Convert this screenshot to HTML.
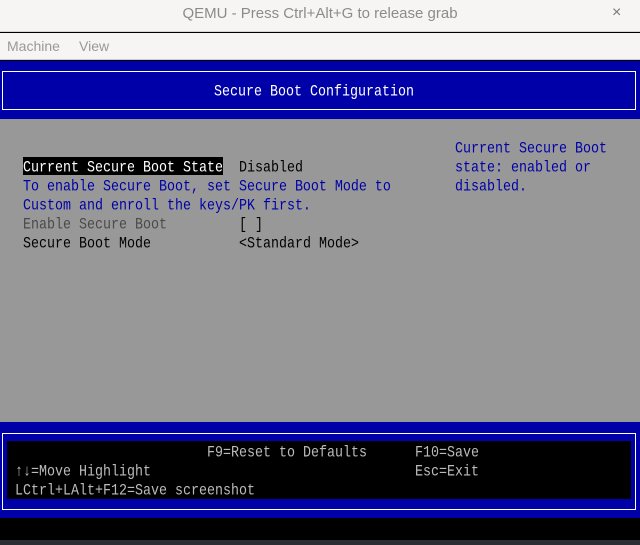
<!DOCTYPE html>
<html><head><style>
*{margin:0;padding:0;box-sizing:border-box}
body{width:640px;height:545px;overflow:hidden;background:#000;position:relative;font-family:"Liberation Sans",sans-serif}
.abs{position:absolute}
.t{position:absolute;font-family:"Liberation Mono",monospace;font-size:13.33px;line-height:19px;height:19px;white-space:pre;transform:translateY(2px) scaleY(1.2);transform-origin:center}
</style></head><body>
<div class="abs" style="left:0;top:0;width:640px;height:32px;background:#f6f5f4;border-bottom:1px solid #d8d4d0"></div>
<div class="abs" style="left:0;top:5px;width:640px;text-align:center;font-size:15px;color:#8b8b8b">QEMU - Press Ctrl+Alt+G to release grab</div>
<div class="abs" style="left:612px;top:4px;font-size:16px;color:#777">×</div>
<div class="abs" style="left:0;top:33px;width:640px;height:27px;background:#f6f5f4;border-bottom:1px solid #ccc"></div>
<div class="abs" style="left:7px;top:38px;font-size:14px;color:#999">Machine</div>
<div class="abs" style="left:79px;top:38px;font-size:14px;color:#999">View</div>
<div class="abs" style="left:0;top:61px;width:640px;height:58px;background:#0000a8"></div>
<div class="abs" style="left:2px;top:71px;width:634px;height:39px;border:1px solid #fff"></div>
<div class="t" style="left:214px;top:81px;color:#fff">Secure Boot Configuration</div>
<div class="abs" style="left:0;top:119px;width:640px;height:303px;background:#989898"></div>
<div class="abs" style="left:23px;top:157px;width:200px;height:18px;background:#000"></div>
<div class="t" style="left:23px;top:157px;color:#fff">Current Secure Boot State</div>
<div class="t" style="left:239px;top:157px;color:#000">Disabled</div>
<div class="t" style="left:23px;top:176px;color:#0000a8">To enable Secure Boot, set Secure Boot Mode to</div>
<div class="t" style="left:23px;top:195px;color:#0000a8">Custom and enroll the keys/PK first.</div>
<div class="t" style="left:23px;top:214px;color:#4a4a4a">Enable Secure Boot</div>
<div class="t" style="left:239px;top:214px;color:#000">[ ]</div>
<div class="t" style="left:23px;top:233px;color:#000">Secure Boot Mode</div>
<div class="t" style="left:239px;top:233px;color:#000">&lt;Standard Mode&gt;</div>
<div class="t" style="left:455px;top:138px;color:#0000a8">Current Secure Boot</div>
<div class="t" style="left:455px;top:157px;color:#0000a8">state: enabled or</div>
<div class="t" style="left:455px;top:176px;color:#0000a8">disabled.</div>
<div class="abs" style="left:0;top:422px;width:640px;height:96px;background:#0000a8"></div>
<div class="abs" style="left:2px;top:433px;width:634px;height:77px;border:1px solid #fff"></div>
<div class="abs" style="left:7px;top:441px;width:624px;height:58px;background:#000"></div>
<div class="t" style="left:207px;top:442px;color:#bbb">F9=Reset to Defaults</div>
<div class="t" style="left:415px;top:442px;color:#bbb">F10=Save</div>
<div class="t" style="left:15px;top:461px;color:#bbb">↑↓=Move Highlight</div>
<div class="t" style="left:415px;top:461px;color:#bbb">Esc=Exit</div>
<div class="t" style="left:15px;top:480px;color:#bbb">LCtrl+LAlt+F12=Save screenshot</div>
<div class="abs" style="left:0;top:540px;width:640px;height:5px;background:#2b2e33"></div>
</body></html>
